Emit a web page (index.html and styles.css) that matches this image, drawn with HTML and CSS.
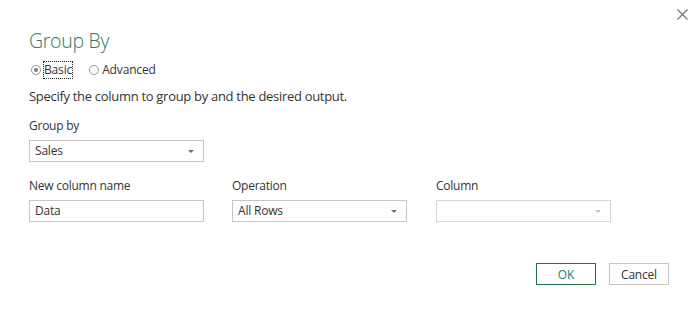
FILE: index.html
```html
<!DOCTYPE html>
<html lang="en">
<head>
    <meta charset="UTF-8">
    <title>Group By</title>
    <link rel="stylesheet" href="styles.css">
</head>
<body>
    <div class="dialog">
        <button class="close" aria-label="Close">
            <svg width="11" height="11" viewBox="0 0 11 11"><path d="M0.5 0.5 L10.5 10.5 M10.5 0.5 L0.5 10.5" stroke="#707070" stroke-width="1.1" fill="none"/></svg>
        </button>

        <h1 class="title">Group By</h1>

        <div class="modes">
            <label class="radio"><span class="dot checked"></span><span class="focus">Basic</span></label>
            <label class="radio"><span class="dot"></span>Advanced</label>
        </div>

        <p class="hint">Specify the column to group by and the desired output.</p>

        <div class="field">
            <div class="label">Group by</div>
            <div class="select col-a">Sales<span class="arrow"></span></div>
        </div>

        <div class="row">
            <div class="field">
                <div class="label">New column name</div>
                <div class="input col-a">Data</div>
            </div>
            <div class="field col-op">
                <div class="label">Operation</div>
                <div class="select col-b">All Rows<span class="arrow"></span></div>
            </div>
            <div class="field col-col">
                <div class="label">Column</div>
                <div class="select col-a disabled"><span class="arrow"></span></div>
            </div>
        </div>

        <div class="buttons">
            <button class="btn ok">OK</button>
            <button class="btn">Cancel</button>
        </div>
    </div>
</body>
</html>
```

FILE: styles.css
```css
body {
    margin: 0;
    background: #ffffff;
    font-family: "Open Sans", "Noto Sans", sans-serif;
    color: #333333;
}

.dialog {
    position: relative;
    height: 314px;
    box-sizing: border-box;
    padding: 27px 30px 0 29px;
}

.close {
    position: absolute;
    top: 8px;
    right: 11px;
    border: none;
    background: none;
    padding: 0;
    cursor: pointer;
}

.title {
    margin: 0;
    font-size: 19.5px;
    font-weight: 300;
    letter-spacing: -0.3px;
    color: #2a7a64;
    line-height: 28px;
}

.modes {
    display: flex;
    gap: 15px;
    margin-top: 6px;
    font-size: 12px;
    letter-spacing: -0.15px;
    line-height: 18px;
    color: #333333;
}

.radio {
    display: flex;
    align-items: center;
    gap: 3px;
}

.dot {
    width: 8px;
    height: 8px;
    border: 1px solid #9a9a9a;
    border-radius: 50%;
    box-sizing: content-box;
    margin-left: 2px;
    position: relative;
}

.dot.checked::after {
    content: "";
    position: absolute;
    left: 2px;
    top: 2px;
    width: 4px;
    height: 4px;
    border-radius: 50%;
    background: #7a7a7a;
}

.focus {
    outline: 1px dotted #222222;
    outline-offset: 0;
    line-height: 16px;
}

.hint {
    margin: 7px 0 0 0;
    font-size: 13px;
    letter-spacing: -0.3px;
    line-height: 20px;
}

.field {
    display: flex;
    flex-direction: column;
}

.hint + .field {
    margin-top: 11px;
}

.label {
    font-size: 12px;
    letter-spacing: -0.25px;
    line-height: 18px;
    margin-bottom: 5px;
}

.row {
    display: flex;
    margin-top: 15px;
}

.col-op {
    margin-left: 28px;
}

.col-col {
    margin-left: 29px;
}

.select, .input {
    height: 22px;
    box-sizing: border-box;
    border: 1px solid #c6c6c6;
    font-size: 12px;
    letter-spacing: -0.2px;
    line-height: 20px;
    padding-left: 5px;
    position: relative;
}

.col-a {
    width: 175px;
}

.col-b {
    width: 175px;
}

.select.disabled {
    border-color: #d6d6d6;
}

.arrow {
    position: absolute;
    right: 9px;
    top: 9px;
    width: 0;
    height: 0;
    border-left: 3px solid transparent;
    border-right: 3px solid transparent;
    border-top: 3px solid #6e6e6e;
}

.disabled .arrow {
    border-top-color: #c0c0c0;
}

.buttons {
    display: flex;
    justify-content: flex-end;
    gap: 13px;
    margin-top: 41px;
}

.btn {
    width: 60px;
    height: 22px;
    background: #ffffff;
    border: 1px solid #c6c6c6;
    font-family: inherit;
    font-size: 12px;
    letter-spacing: -0.2px;
    color: #333333;
    padding: 0;
}

.btn.ok {
    border-color: #217346;
    color: #2a7a64;
}
```
